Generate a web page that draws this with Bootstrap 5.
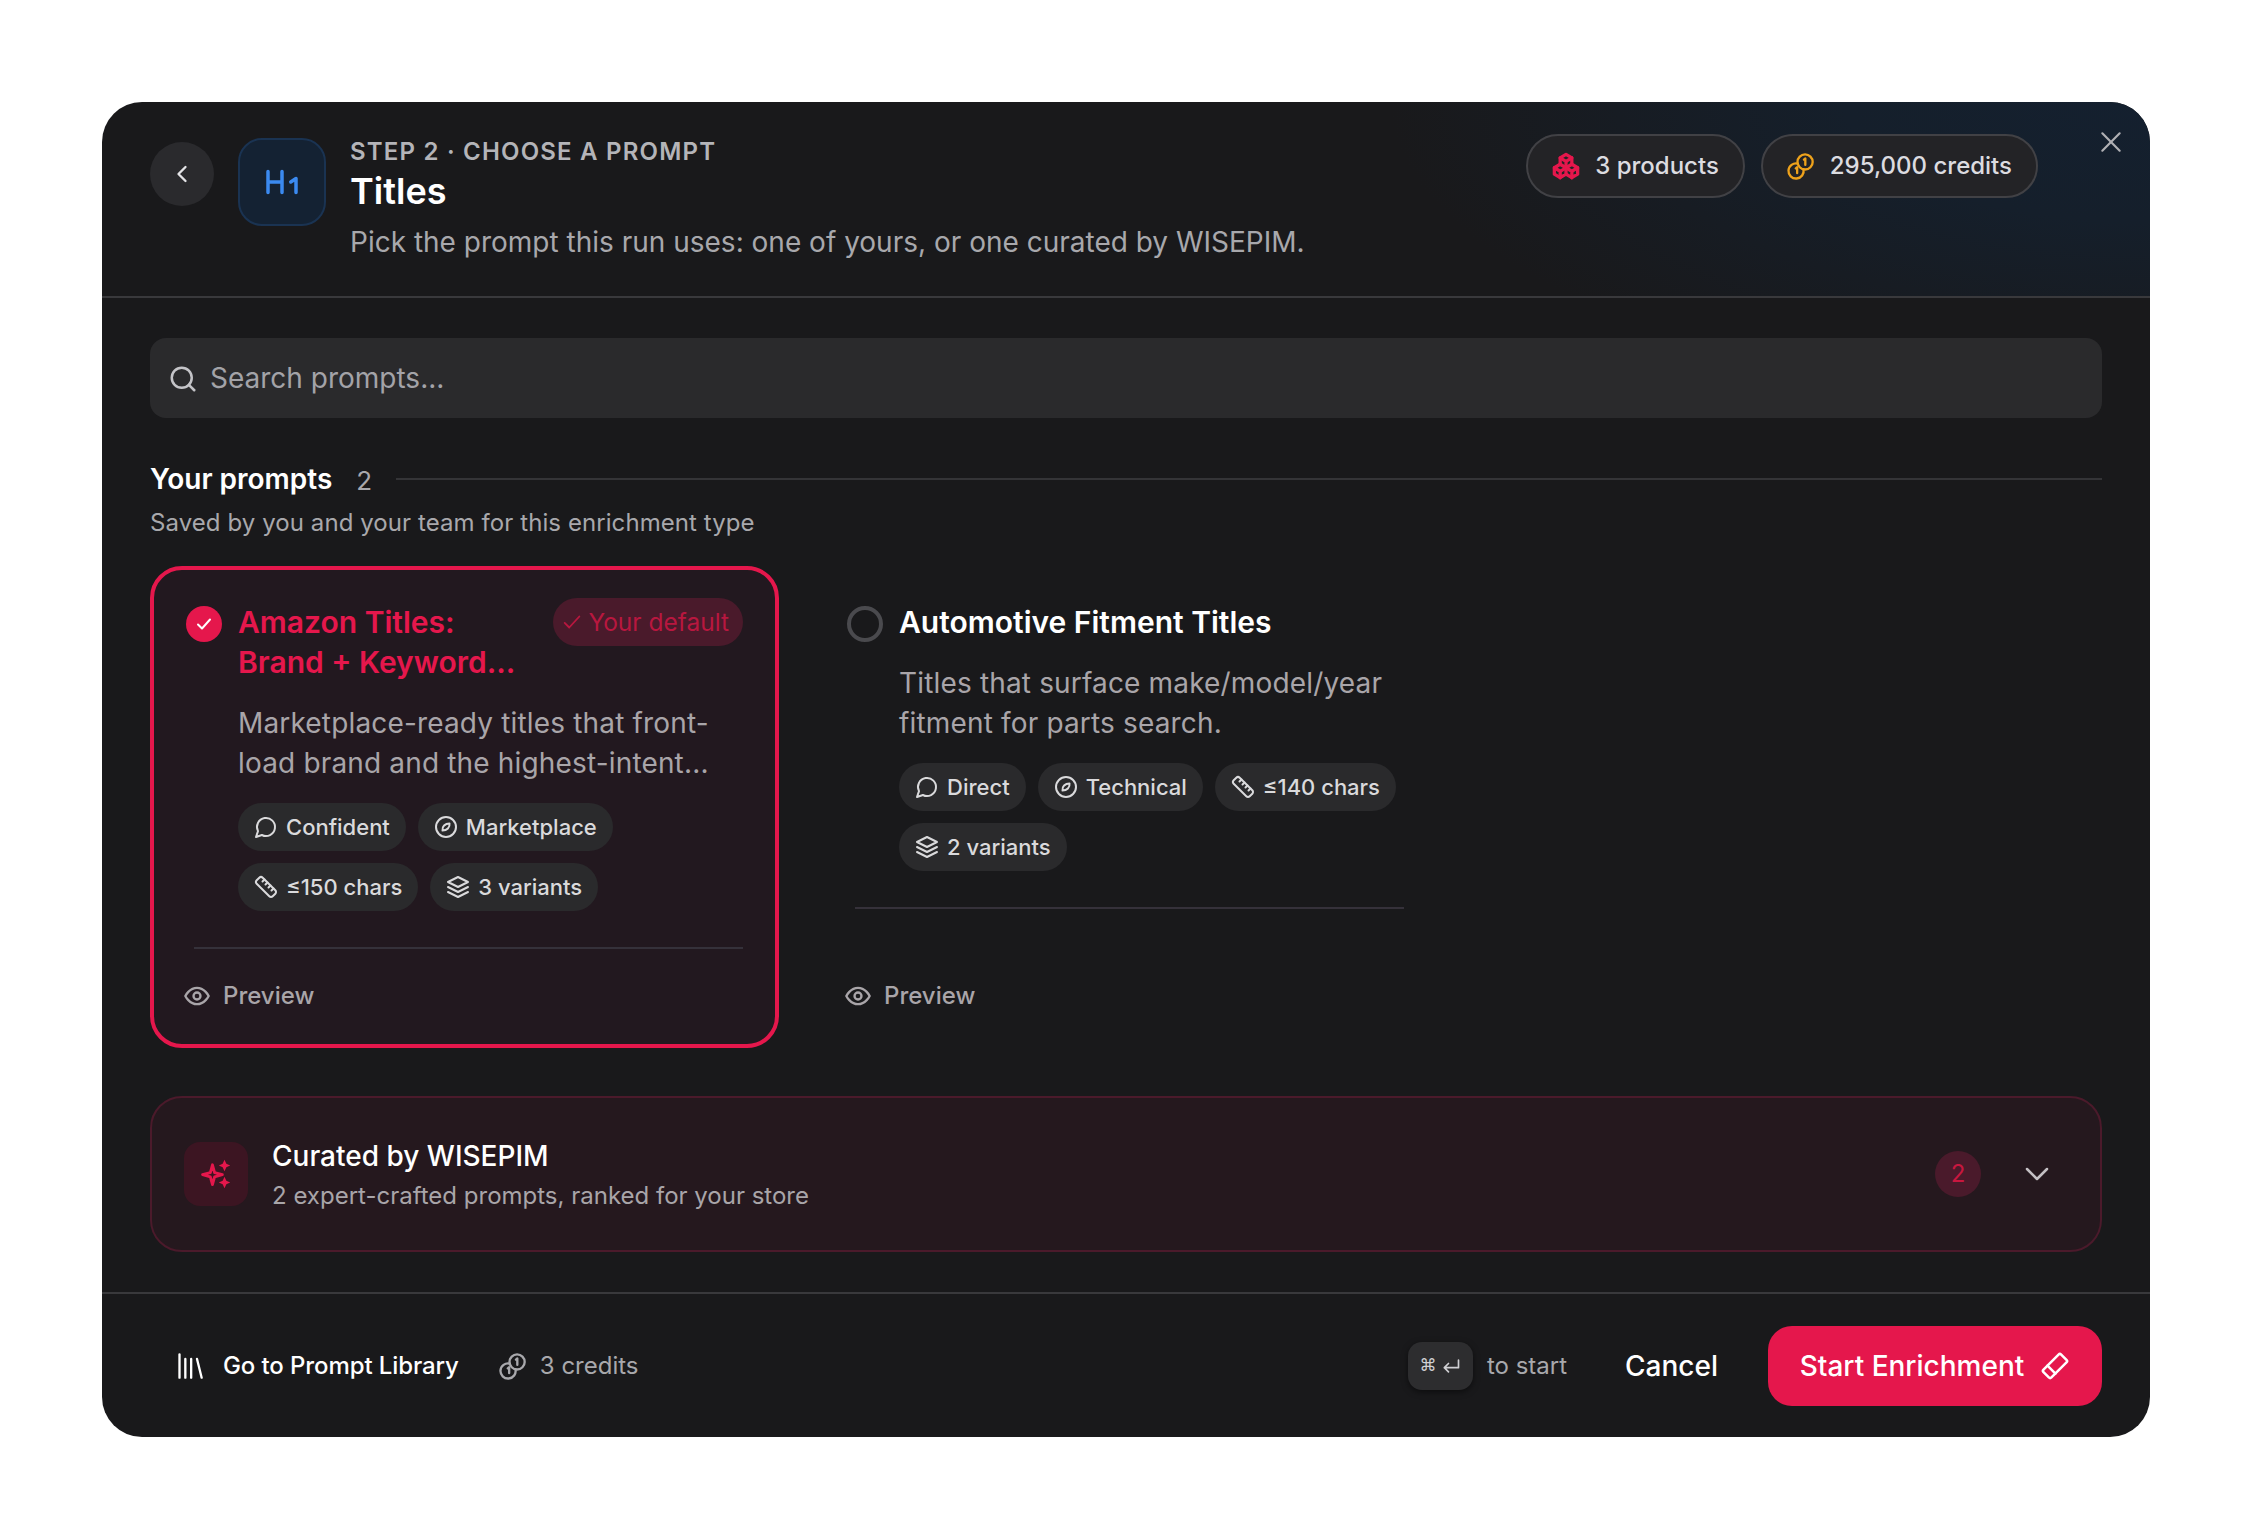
<!DOCTYPE html>
<html lang="en">
<head>
    <meta charset="UTF-8">
    <title>Choose a prompt</title>
    <link href="https://cdn.jsdelivr.net/npm/bootstrap@5.3.2/dist/css/bootstrap.min.css" rel="stylesheet">
    <style>
        body { background: #fff; font-family: Inter, "Liberation Sans", sans-serif; color: #fff; }
        svg.i { fill: none; stroke: currentColor; stroke-width: 2; stroke-linecap: round; stroke-linejoin: round; flex-shrink: 0; }
        svg.i.cubes { color: #e5174c; stroke-width: 2.8; }
        svg.i.gold { color: #eea21b; }
        svg.i.chev { color: #c4c0c4; }
        .shell { width: 2048px; height: 1335px; margin: 102px 0 0 102px; background: #19191b; border-radius: 40px; overflow: hidden; }

        .top { height: 196px; padding: 32px 112px 0 48px; gap: 24px; border-bottom: 2px solid #39393c; background: radial-gradient(ellipse 760px 300px at 100% 0, #14202f 0, #151f2b 40%, rgba(25,25,27,0) 100%); }
        .back { width: 64px; height: 64px; margin-top: 8px; background: #2a2a2d; color: #e4e4e7; }
        .tile { width: 88px; height: 88px; margin-top: 4px; border-radius: 24px; background: #142233; border: 2px solid #1a3352; color: #3b8af0; }
        .step { font-size: 24px; line-height: 34px; font-weight: 600; letter-spacing: 1.2px; color: #b4b4b8; margin-top: 1px; }
        .page-title { font-size: 36px; line-height: 44px; font-weight: 600; margin: 0; }
        .sub { font-size: 28px; line-height: 40px; margin: 9px 0 0; color: #a8a8ac; }
        .stat { height: 64px; padding: 0 24px; gap: 15px; border: 2px solid #414145; background: #232326; font-size: 24px; font-weight: 500; color: #dcdce0; }
        .closer { top: 27px; right: 26px; padding: 0; color: #b0b0b4; line-height: 0; }

        .main { padding: 40px 48px; }
        .search { height: 80px; border: 0; border-radius: 16px; background: #2a2a2c; color: #fff; font-size: 28px; padding-left: 60px; }
        .search::placeholder { color: #a3a3a8; }
        .search-ic { left: 18px; top: 26px; color: #c4c4c8; }
        .sec-head { margin-top: 42px; height: 40px; gap: 24px; }
        .sec-head h2 { font-size: 28px; font-weight: 600; margin: 0; }
        .sec-head span { font-size: 26px; color: #a8a8ac; }
        .sec-line { height: 2px; background: #343437; margin-bottom: 2px; }
        .sec-sub { font-size: 24px; line-height: 36px; letter-spacing: .08px; color: #a8a8ac; margin: 5px 0 25px; }

        .prompts { display: grid; grid-template-columns: repeat(3, 629px); gap: 32px; }
        .prompt { height: 482px; border: 4px solid transparent; border-radius: 32px; padding: 28px 32px 0; }
        .prompt.on { border-color: #e5174c; background: #22181f; }
        .check { width: 36px; height: 36px; margin: 8px 0 -8px; background: #e5174c; color: #fff; }
        .radio { width: 36px; height: 36px; margin: 8px 0 -8px; border: 4px solid #4a4a4e; }
        .p-title { font-size: 30px; line-height: 40px; font-weight: 600; margin: 4px 0 0; }
        .on .p-title { color: #e5174c; }
        .mine { height: 48px; padding: 0 14px 0 8px; gap: 5px; background: #4a1a2b; color: #b8173f; font-size: 24.5px; }
        .p-desc { font-size: 28px; line-height: 40px; letter-spacing: .16px; color: #a9a5a9; margin: 0; padding-top: 21px; }
        .chips { gap: 12px; margin-top: 20px; }
        .chip { height: 48px; padding: 0 16px; gap: 8px; background: #2a2a2c; color: #dadadc; font-size: 22px; font-weight: 500; }
        .p-body { padding-left: 52px; }
        .p-rule { height: 2px; background: #35313a; margin: 36px 0 0 8px; }
        .peek { gap: 12px; margin: auto 0 30px -3px; font-size: 24px; font-weight: 500; color: #a9a5a9; }

        .curated { height: 156px; margin-top: 48px; padding: 0 48px 0 32px; border: 2px solid #4b1a2b; border-radius: 32px; background: #25181e; }
        .spark { width: 64px; height: 64px; margin-right: 24px; border-radius: 16px; background: #3c1522; color: #e5174c; }
        .cur-text { padding-top: 3px; }
        .cur-title { font-size: 28px; line-height: 40px; font-weight: 500; }
        .cur-sub { font-size: 24px; line-height: 40px; color: #a9a5a9; }
        .count { width: 46px; height: 46px; margin-right: 41px; background: #4a1a2b; color: #c8173f; font-size: 24px; }

        .bottom { height: 145px; padding: 0 48px 0 74px; border-top: 2px solid #39393c; }
        .lib { gap: 19px; font-size: 24px; letter-spacing: -.1px; font-weight: 500; color: #fff; }
        .cost { gap: 13px; margin-left: 40px; font-size: 24px; color: #a8a8ac; }
        .keys { width: 65px; height: 48px; gap: 5px; border-radius: 14px; background: #2d2d2f; box-shadow: 0 2px 6px rgba(0,0,0,.5); font-family: "DejaVu Sans", sans-serif; font-size: 17px; color: #d0d0d4; margin-right: 14px; }
        .hint { font-size: 24px; color: #a8a8ac; margin-right: 58px; }
        .cancel { padding: 0; border: 0; font-size: 28px; font-weight: 500; color: #fff; margin-right: 50px; }
        .go { height: 80px; width: 334px; gap: 16px; padding: 0; border: 0; border-radius: 24px; background: #e5174c; color: #fff; font-size: 28px; font-weight: 500; }
    </style>
</head>
<body>
    <svg width="0" height="0" class="position-absolute">
        <symbol id="bubble" viewBox="0 0 24 24"><path d="M7.9 20A9 9 0 1 0 4 16.1L2 22Z"/></symbol>
        <symbol id="compass" viewBox="0 0 24 24"><circle cx="12" cy="12" r="10"/><path d="M8.5 15.5c-.6-4 2.5-7 7-7 .6 4-2.5 7-7 7z"/></symbol>
        <symbol id="ruler" viewBox="0 0 24 24"><path d="M21.3 15.3a2.4 2.4 0 0 1 0 3.4l-2.6 2.6a2.4 2.4 0 0 1-3.4 0L2.7 8.7a2.41 2.41 0 0 1 0-3.4l2.6-2.6a2.41 2.41 0 0 1 3.4 0Z"/><path d="m14.5 12.5 2-2M11.5 9.5l2-2M8.5 6.5l2-2M17.5 15.5l2-2"/></symbol>
        <symbol id="layers" viewBox="0 0 24 24"><path d="M12 2 2 7l10 5 10-5-10-5z"/><path d="m2 17 10 5 10-5"/><path d="m2 12 10 5 10-5"/></symbol>
        <symbol id="eye" viewBox="0 0 24 24"><path d="M2 12s3.5-7 10-7 10 7 10 7-3.5 7-10 7-10-7-10-7z"/><circle cx="12" cy="12" r="3"/></symbol>
        <symbol id="coins" viewBox="0 0 24 24"><circle cx="15.5" cy="8.5" r="6.5"/><path d="M9.2 9.9A6.5 6.5 0 1 0 14.1 14.8"/><path d="M14.5 6.5l1.2-.9v5.4"/><path d="M7.5 14l1.2-.9v5"/></symbol>
    </svg>

    <div class="shell d-flex flex-column position-relative">
        <header class="top d-flex align-items-start position-relative">
            <button class="back btn rounded-circle d-flex align-items-center justify-content-center p-0 border-0" type="button">
                <svg class="i" width="28" height="28" viewBox="0 0 24 24"><path d="m15 18-6-6 6-6"/></svg>
            </button>
            <div class="tile d-flex align-items-center justify-content-center">
                <svg class="i" width="42" height="42" viewBox="0 0 24 24"><path d="M4 12h8M4 18V6M12 18V6M17 12l3-2v8"/></svg>
            </div>
            <div class="flex-grow-1">
                <div class="step">STEP 2 · CHOOSE A PROMPT</div>
                <h1 class="page-title">Titles</h1>
                <p class="sub">Pick the prompt this run uses: one of yours, or one curated by WISEPIM.</p>
            </div>
            <div class="d-flex gap-3">
                <div class="stat rounded-pill d-flex align-items-center">
                    <svg class="i cubes" width="28" height="28" viewBox="0 0 24 24"><path d="M7 16.5l-5-3 5-3 5 3V19l-5 3z"/><path d="M2 13.5V19l5 3"/><path d="M7 16.55l5-3.03"/><path d="M17 16.5l-5-3 5-3 5 3V19l-5 3z"/><path d="M12 19l5 3"/><path d="M17 16.5l5-3"/><path d="M12 13.5V8L7 5l5-3 5 3v5.5"/><path d="M7 5.03v5.46"/><path d="M12 8l5-3"/></svg>
                    <span>3 products</span>
                </div>
                <div class="stat rounded-pill d-flex align-items-center">
                    <svg class="i gold" width="28" height="28"><use href="#coins"/></svg>
                    <span>295,000 credits</span>
                </div>
            </div>
            <button class="closer btn position-absolute border-0" type="button" aria-label="Close">
                <svg class="i" width="26" height="26" viewBox="0 0 24 24"><path d="M4 4l16 16M20 4 4 20"/></svg>
            </button>
        </header>

        <main class="main flex-grow-1">
            <div class="position-relative">
                <svg class="i search-ic position-absolute" width="30" height="30" viewBox="0 0 24 24"><circle cx="11" cy="11" r="8"/><path d="m21 21-4.3-4.3"/></svg>
                <input class="form-control search" type="text" placeholder="Search prompts...">
            </div>

            <div class="sec-head d-flex align-items-center">
                <h2>Your prompts</h2>
                <span>2</span>
                <div class="sec-line flex-grow-1"></div>
            </div>
            <p class="sec-sub">Saved by you and your team for this enrichment type</p>

            <div class="prompts">
                <div class="prompt on d-flex flex-column">
                    <div class="d-flex align-items-start">
                        <div class="check rounded-circle d-flex align-items-center justify-content-center flex-shrink-0 me-3">
                            <svg class="i" width="24" height="24" viewBox="0 0 24 24"><path d="M6 12.5l4 4 8-9"/></svg>
                        </div>
                        <h3 class="p-title flex-grow-1">Amazon Titles:<br>Brand + Keyword...</h3>
                        <span class="mine rounded-pill d-inline-flex align-items-center flex-shrink-0">
                            <svg class="i" width="22" height="22" viewBox="0 0 24 24"><path d="M4 13l5 5L20 6"/></svg>Your default
                        </span>
                    </div>
                    <div class="p-body">
                        <p class="p-desc">Marketplace-ready titles that front-load brand and the highest-intent...</p>
                        <div class="chips d-flex flex-wrap">
                            <span class="chip rounded-pill d-inline-flex align-items-center"><svg class="i" width="24" height="24"><use href="#bubble"/></svg>Confident</span>
                            <span class="chip rounded-pill d-inline-flex align-items-center"><svg class="i" width="24" height="24"><use href="#compass"/></svg>Marketplace</span>
                            <span class="chip rounded-pill d-inline-flex align-items-center"><svg class="i" width="24" height="24"><use href="#ruler"/></svg>≤150 chars</span>
                            <span class="chip rounded-pill d-inline-flex align-items-center"><svg class="i" width="24" height="24"><use href="#layers"/></svg>3 variants</span>
                        </div>
                    </div>
                    <div class="p-rule"></div>
                    <div class="peek d-flex align-items-center"><svg class="i" width="28" height="28"><use href="#eye"/></svg>Preview</div>
                </div>

                <div class="prompt d-flex flex-column">
                    <div class="d-flex align-items-start">
                        <div class="radio rounded-circle flex-shrink-0 me-3"></div>
                        <h3 class="p-title flex-grow-1">Automotive Fitment Titles</h3>
                    </div>
                    <div class="p-body">
                        <p class="p-desc">Titles that surface make/model/year fitment for parts search.</p>
                        <div class="chips d-flex flex-wrap">
                            <span class="chip rounded-pill d-inline-flex align-items-center"><svg class="i" width="24" height="24"><use href="#bubble"/></svg>Direct</span>
                            <span class="chip rounded-pill d-inline-flex align-items-center"><svg class="i" width="24" height="24"><use href="#compass"/></svg>Technical</span>
                            <span class="chip rounded-pill d-inline-flex align-items-center"><svg class="i" width="24" height="24"><use href="#ruler"/></svg>≤140 chars</span>
                            <span class="chip rounded-pill d-inline-flex align-items-center"><svg class="i" width="24" height="24"><use href="#layers"/></svg>2 variants</span>
                        </div>
                    </div>
                    <div class="p-rule"></div>
                    <div class="peek d-flex align-items-center"><svg class="i" width="28" height="28"><use href="#eye"/></svg>Preview</div>
                </div>
            </div>

            <div class="curated d-flex align-items-center">
                <div class="spark d-flex align-items-center justify-content-center">
                    <svg width="34" height="34" viewBox="0 0 24 24" class="i"><path d="M9.5 5.5 11 11l5.5 1.5L11 14l-1.5 5.500L8 14l-5.500-1.500L8 11z"/><path d="M18 2l1.3 2.7L22 6l-2.700 1.300L18 10l-1.300-2.700L14 6l2.700-1.300z" fill="currentColor" stroke="none"/><path d="M18 14l1.300 2.700L22 18l-2.700 1.300L18 22l-1.300-2.700L14 18l2.700-1.300z" fill="currentColor" stroke="none"/></svg>
                </div>
                <div class="cur-text flex-grow-1">
                    <div class="cur-title">Curated by WISEPIM</div>
                    <div class="cur-sub">2 expert-crafted prompts, ranked for your store</div>
                </div>
                <span class="count rounded-circle d-flex align-items-center justify-content-center">2</span>
                <svg class="i chev" width="30" height="30" viewBox="0 0 24 24"><path d="m4 8 8 8 8-8"/></svg>
            </div>
        </main>

        <footer class="bottom d-flex align-items-center">
            <div class="lib d-flex align-items-center">
                <svg class="i" width="28" height="28" viewBox="0 0 24 24"><path d="M3 2v20M8 6v16M13 6v16M18 6l4 16"/></svg>
                <span>Go to Prompt Library</span>
            </div>
            <div class="cost d-flex align-items-center">
                <svg class="i" width="28" height="28"><use href="#coins"/></svg>
                <span>3 credits</span>
            </div>
            <div class="ms-auto d-flex align-items-center">
                <span class="keys d-flex align-items-center justify-content-center">⌘<svg class="i" width="20" height="20" viewBox="0 0 24 24"><path d="M21 5v9H4M9 9l-5 5 5 5"/></svg></span>
                <span class="hint">to start</span>
                <button class="cancel btn" type="button">Cancel</button>
                <button class="go btn d-flex align-items-center justify-content-center" type="button">
                    Start Enrichment
                    <svg class="i" width="30" height="30" viewBox="0 0 24 24"><g transform="rotate(45 12 12)"><rect x="7.5" y="2" width="9" height="20" rx="1.5"/><path d="M7.5 16h9"/></g></svg>
                </button>
            </div>
        </footer>
    </div>
</body>
</html>
